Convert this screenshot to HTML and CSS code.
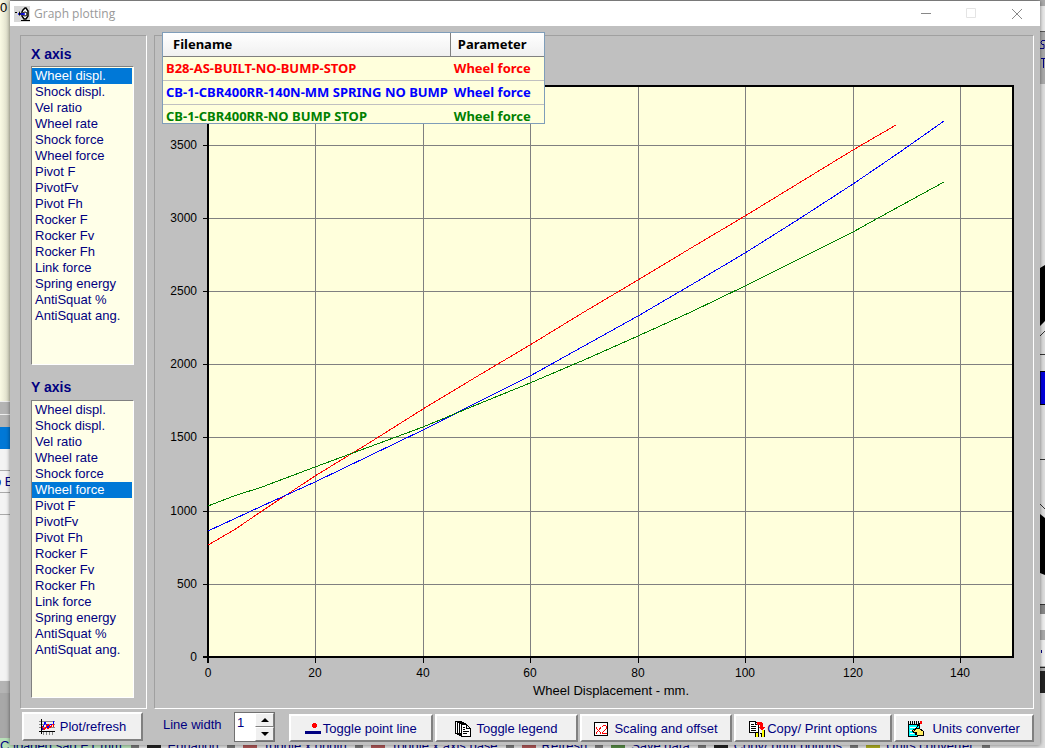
FILE: index.html
```html
<!DOCTYPE html>
<html lang="en">
<head>
<meta charset="utf-8">
<title>Graph plotting</title>
<link rel="stylesheet" href="styles.css">
</head>
<body>
<div class="backdrop" aria-hidden="true">
  <div class="back-left">
    <div class="back-cream">0</div>
    <div class="back-bar"></div>
    <div class="back-bar"></div>
    <div class="back-select"></div>
    <div class="back-row"></div>
    <div class="back-row">o&nbsp;E</div>
    <div class="back-row"></div>
    <div class="back-sheet"></div>
    <div class="back-bar"></div>
  </div>
  <svg class="back-right" viewBox="1040 0 5 748" preserveAspectRatio="none">
    <path fill="#aaa" d="M1040 0h5v748h-5z"/>
    <path fill="#e8e8e8" d="M1040 6h5v25h-5z"/>
    <path fill="#555" d="M1040 31h5v1h-5z"/>
    <path stroke="#000080" fill="none" d="M1045 40.500h-3l-1 2 1 2h2v4h-4M1041 58.500h4M1043.500 59v9"/>
    <path fill="#ddd" d="M1040 84h5v527h-5z"/>
    <path d="M1040 268l5-3v56l-5 5zM1040 514l5 4v57l-5-2z"/>
    <path fill="#00d" stroke="#000" d="M1040 371.500h6v33h-6z"/>
    <path stroke="#333" fill="none" d="M1040 336l5-5M1040 354.500h5M1040 459.500h5M1040 504l5 5M1040 604.500h5"/>
    <path fill="#888" d="M1040 605h5v9h-5z"/>
    <path fill="#eee" d="M1040 614h5v16h-5zM1040 640h5v26h-5z"/>
    <path fill="#000080" d="M1041 650h1v3h-1z"/>
    <path fill="#222" d="M1040 667h5v1h-5zM1040 671h5v22h-5z"/>
    <path fill="#ddd" d="M1040 693h5v55h-5z"/>
  </svg>
  <div class="back-tools">
    <span class="back-tool back-green">C loaded sag ET mm:</span>
    <span class="back-tool"><i class="mark"></i>Equation</span>
    <span class="back-tool"><i class="mark mark-red"></i>Toggle x origin</span>
    <span class="back-tool"><i class="mark mark-red"></i>Toggle x axis base</span>
    <span class="back-tool"><i class="mark mark-red"></i>Refresh</span>
    <span class="back-tool"><i class="mark mark-green"></i>Save data</span>
    <span class="back-tool"><i class="mark"></i>Copy/ print options</span>
    <span class="back-tool"><i class="mark mark-yellow"></i>Units converter</span>
    <span class="back-rest"></span>
  </div>
</div>

<main class="window">
  <header class="titlebar">
    <svg class="app-icon" width="16" height="16" viewBox="0 0 16 16">
      <path fill="#d8d8d8" d="M0 0h16v16H0z"/>
      <path fill="#fff" stroke="#000" stroke-width="1.500" d="M9 4l2-2h1l2 3v5l-2 3h-2l-2-3V6z"/>
      <circle cx="11" cy="8" r="2" fill="none" stroke="#000"/>
      <path stroke="#00f" stroke-width="1.500" d="M4 8h7"/>
      <path d="M1 6h2v1H1zM5 5l2 3-2 2zM7 14h9v1H7z"/>
    </svg>
    <h1 class="title">Graph plotting</h1>
    <div class="window-buttons">
      <button class="window-button" aria-label="Minimize"><svg width="12" height="12" viewBox="0 0 12 12"><path stroke="#888" d="M1 5.500h10"/></svg></button>
      <button class="window-button" aria-label="Maximize" disabled><svg width="12" height="12" viewBox="0 0 12 12"><path fill="none" stroke="#e4e4e4" d="M.5.5h9v9h-9z"/></svg></button>
      <button class="window-button" aria-label="Close"><svg width="12" height="12" viewBox="0 0 12 12"><path stroke="#888" d="M1 1l10 10M11 1L1 11"/></svg></button>
    </div>
  </header>

  <div class="content">
    <section class="panel axes">
      <label class="axis-label" for="x-axis">X axis</label>
      <select class="listbox" id="x-axis" size="18">
        <option selected>Wheel displ.</option><option>Shock displ.</option><option>Vel ratio</option><option>Wheel rate</option><option>Shock force</option><option>Wheel force</option><option>Pivot F</option><option>PivotFv</option><option>Pivot Fh</option><option>Rocker F</option><option>Rocker Fv</option><option>Rocker Fh</option><option>Link force</option><option>Spring energy</option><option>AntiSquat %</option><option>AntiSquat ang.</option>
      </select>
      <label class="axis-label" for="y-axis">Y axis</label>
      <select class="listbox" id="y-axis" size="18">
        <option>Wheel displ.</option><option>Shock displ.</option><option>Vel ratio</option><option>Wheel rate</option><option>Shock force</option><option selected>Wheel force</option><option>Pivot F</option><option>PivotFv</option><option>Pivot Fh</option><option>Rocker F</option><option>Rocker Fv</option><option>Rocker Fh</option><option>Link force</option><option>Spring energy</option><option>AntiSquat %</option><option>AntiSquat ang.</option>
      </select>
    </section>

    <section class="panel plot">
      <svg class="chart" viewBox="155 36 878 672" role="img" aria-label="Wheel force against wheel displacement">
        <path fill="#ffffdc" d="M208 86h805v571H208z"/>
        <path class="grid" d="M315.500 86v577M423.500 86v577M530.500 86v577M638.500 86v577M745.500 86v577M853.500 86v577M960.500 86v577M203 145.500h810M203 218.500h810M203 291.500h810M203 364.500h810M203 437.500h810M203 511.500h810M203 584.500h810"/>
        <path class="ticks" d="M315.500 657v6M423.500 657v6M530.500 657v6M638.500 657v6M745.500 657v6M853.500 657v6M960.500 657v6M203 145.500h5M203 218.500h5M203 291.500h5M203 364.500h5M203 437.500h5M203 511.500h5M203 584.500h5"/>
        <path class="frame" d="M208 86h805v571H208zM203 657h5M208 657v6"/>
        <path class="curve red" d="M208 545L234 530 262 511 315 476 369 443 423 409 476 377 530 345 584 312 638 280 691 248 745 216 799 183 853 150 896 125"/>
        <path class="curve blue" d="M208 531L262 506 315 482 369 456 423 430 476 403 530 376 584 346 638 316 691 285 745 253 799 219 853 184 900 152 944 121"/>
        <path class="curve green" d="M208 506L234 496 262 487 315 467 369 447 423 427 476 405 530 383 584 360 638 336 691 312 745 286 799 259 853 232 880 217 944 182"/>
        <g class="tick-text y-text">
          <text x="197" y="149">3500</text><text x="197" y="222">3000</text><text x="197" y="295">2500</text><text x="197" y="368">2000</text><text x="197" y="441">1500</text><text x="197" y="515">1000</text><text x="197" y="588">500</text><text x="197" y="661">0</text>
        </g>
        <g class="tick-text x-text">
          <text x="208" y="677">0</text><text x="315" y="677">20</text><text x="423" y="677">40</text><text x="530" y="677">60</text><text x="638" y="677">80</text><text x="745" y="677">100</text><text x="853" y="677">120</text><text x="960" y="677">140</text>
        </g>
        <text class="caption" x="611" y="695">Wheel Displacement - mm.</text>
      </svg>
      <table class="legend">
        <thead><tr><th>Filename</th><th>Parameter</th></tr></thead>
        <tbody>
          <tr class="row-red"><td>B28-AS-BUILT-NO-BUMP-STOP</td><td>Wheel force</td></tr>
          <tr class="row-blue"><td>CB-1-CBR400RR-140N-MM SPRING NO BUMP</td><td>Wheel force</td></tr>
          <tr class="row-green"><td>CB-1-CBR400RR-NO BUMP STOP</td><td>Wheel force</td></tr>
        </tbody>
      </table>
    </section>

    <button class="button refresh">
      <svg width="16" height="16" viewBox="0 0 16 16" shape-rendering="crispEdges">
        <path stroke="#888" d="M0 2.500h16M0 5.500h16M0 8.500h16M4.500 13v3M7.500 13v3M10.500 13v3M13.500 13v3"/>
        <path fill="none" stroke="#000" d="M2.500 0v15M0 12.500h16"/>
        <path fill="none" stroke="#00f" d="M3 11l3-8 3 6 3-4 2 1 1-4"/>
        <path fill="none" stroke="#f00" d="M3 7l2 4 4-6 2 4 3-4 1 3M4 11l3-3 2 2 3-3"/>
      </svg>
      Plot/refresh
    </button>

    <div class="toolbar">
      <label class="width-label" for="line-width">Line width</label>
      <div class="spinner">
        <input class="spinner-input" id="line-width" type="text" value="1">
        <div class="spinner-buttons">
          <button class="spin" aria-label="Increase"><svg width="8" height="4" viewBox="0 0 8 4"><path d="M0 4h8L4 0z"/></svg></button>
          <button class="spin" aria-label="Decrease"><svg width="8" height="4" viewBox="0 0 8 4"><path d="M0 0h8L4 4z"/></svg></button>
        </div>
      </div>
      <div class="actions">
        <button class="button tight">
          <svg width="16" height="16" viewBox="0 0 16 16" shape-rendering="crispEdges"><path fill="#000080" d="M0 10h16v3H0z"/><path fill="#f00" d="M8 2h3v1h1v3h-1v1H8V6H7V3h1z"/></svg>
          Toggle point line
        </button>
        <button class="button">
          <svg width="16" height="16" viewBox="0 0 16 16" shape-rendering="crispEdges">
            <path fill="#fff" stroke="#000" d="M.5 12.500V.5h6v12zM2.500 13.500v-12h6v12zM4.500 14.500v-12h6v12z"/>
            <path fill="#fff" stroke="#000" d="M6.500 15.500v-12h5l4 4v8zM11.500 3.500v4h4"/>
            <path stroke="#000" d="M8 6.500h2M8 8.500h2M8 10.500h6M8 12.500h4"/>
          </svg>
          Toggle legend
        </button>
        <button class="button">
          <svg width="15" height="15" viewBox="0 0 15 15" shape-rendering="crispEdges">
            <path fill="#fff" stroke="#000" d="M.5.5h13v13H.5z"/>
            <path fill="none" stroke="#f00" d="M2 5.500l5 6M7 5.500l-5 6M8.500 5V4.500l1-1h2l1 1v2l-4 4v.5H13"/>
          </svg>
          Scaling and offset
        </button>
        <button class="button tight">
          <svg width="16" height="16" viewBox="0 0 16 16" shape-rendering="crispEdges">
            <path fill="#fff" stroke="#000" d="M.5.5h6l3 3v8h-9zM6.500.5v3h3"/>
            <path stroke="#000" d="M2 3.500h3M2 5.500h5M2 7.500h5M2 9.500h5"/>
            <path fill="#f00" d="M8 1h4l2 2v3h2l-3 4-4-4h2V4H8z"/>
            <path fill="#ff0" d="M7 11h2v5H7zM13 9h2v7h-2z"/>
            <path fill="none" stroke="#000" d="M6.500 16v-5h3v5M12.500 16v-4h-2M15.500 16V9"/>
          </svg>
          Copy/ Print options
        </button>
        <button class="button wide">
          <svg width="16" height="16" viewBox="0 0 16 16" shape-rendering="crispEdges">
            <path fill="#fff" stroke="#000" d="M.5 3.500h11v10l-2 2H.5z"/>
            <path fill="#0ff" d="M1 4h10v9l-2 2H1z"/>
            <path stroke="#000" stroke-dasharray="1 1" stroke-width="3" d="M0 1.500h12"/>
            <path stroke="#fff" d="M2 6.500h6M2 9.500h4M2 12.500h4"/>
            <path fill="#ffec60" stroke="#000" d="M4.500 9.500l3-2h4l4 3v4h-5l-3-1 1-2h-3z"/>
            <path stroke="#000" d="M6 10l6-8"/><path fill="#f00" d="M12 0h2v3h-2z"/>
          </svg>
          Units converter
        </button>
      </div>
    </div>
  </div>
</main>
</body>
</html>
```
FILE: styles.css
```css
* { box-sizing: border-box; }

body {
  margin: 0;
  height: 100vh;
  overflow: hidden;
  position: relative;
  font: 13px/16px "Liberation Sans", Arial, sans-serif;
  color: #000080;
  background: #aaa;
}

button, input, select { font: inherit; color: inherit; margin: 0; }

/* Application behind the dialog */
.backdrop {
  height: 100%;
  display: grid;
  grid-template-columns: 10px 1fr 5px;
  grid-template-rows: 1fr 10px;
  background: #999;
}
.back-left { grid-area: 1 / 1; display: flex; flex-direction: column; overflow: hidden; min-height: 0; background: #a8a8a8; }
.back-cream { height: 401px; background: linear-gradient(90deg, #fafae4, #d8d8c4); color: #000; }
.back-bar { height: 13px; background: #b4b4b4; border-top: 1px solid #eee; }
.back-select { height: 22px; background: #0078d7; }
.back-row { height: 22px; background: #f4f4f4; border-bottom: 1px solid #aaa; white-space: nowrap; line-height: 22px; text-indent: -6px; }
.back-sheet { height: 165px; background: #f4f4f4; }
.back-right { grid-area: 1 / 3 / 3 / 4; width: 100%; height: 100%; }
.back-tools {
  grid-area: 2 / 1 / 3 / 4;
  display: flex;
  gap: 8px;
  overflow: hidden;
  line-height: 15px;
  white-space: nowrap;
  background: #777;
}
.back-tool { display: flex; gap: 6px; padding: 0 8px; background: #ddd; }
.back-green { padding: 0 6px 0 0; background: #b8e0b8; }
.back-rest { flex: 1; background: #ddd; }
.mark { width: 14px; background: #222; }
.mark-red { background: #a55; }
.mark-green { background: #584; }
.mark-yellow { background: #aa2; }

/* Dialog */
.window {
  position: absolute;
  inset: 1px 5px 3px 10px;
  display: flex;
  flex-direction: column;
  background: #c0c0c0;
  box-shadow: 0 0 4px rgba(0, 0, 0, .5);
}
.titlebar { display: flex; align-items: center; height: 25px; padding-left: 4px; background: #fff; }
.title { margin: 0 0 0 4px; flex: 1; font: 12px/16px "Open Sans", "Noto Sans", sans-serif; color: #999; }
.window-buttons { display: flex; padding-right: 1px; }
.window-button { display: flex; align-items: center; justify-content: center; width: 46px; height: 24px; padding: 0; border: 0; background: none; }
.window-button:last-child { width: 44px; }

.content {
  flex: 1;
  min-height: 0;
  display: grid;
  grid-template-columns: 127px 1fr;
  grid-template-rows: 1fr 30px;
  gap: 3px 7px;
  padding: 9px 6px 3px 10px;
}
.panel { border: 1px solid; border-color: #a0a0a0 #fff #fff #a0a0a0; min-height: 0; }
.axes { display: flex; flex-direction: column; padding: 8px 12px 10px 10px; }
.axis-label { font-weight: bold; font-size: 14px; line-height: 20px; padding-bottom: 2px; }
.listbox {
  flex: 1;
  min-height: 0;
  width: 100%;
  padding: 1px 1px 0 0;
  overflow: hidden;
  border: 1px solid;
  border-color: #808080 #fff #fff #808080;
  border-radius: 0;
  outline: 0;
  background: #ffffe8;
}
.listbox + .axis-label { padding: 12px 0 3px; }
.listbox option { min-height: 16px; padding: 0 0 0 3px; line-height: 18px; height: 16px; }
.listbox option:checked { color: #fff; background: #0078d7 linear-gradient(#0078d7, #0078d7); }

.plot { position: relative; }
.chart { display: block; width: 100%; height: 100%; }
.grid { stroke: #808080; fill: none; }
.ticks { stroke: #000; fill: none; }
.frame { stroke: #000; stroke-width: 2px; fill: none; }
.curve { fill: none; shape-rendering: crispEdges; }
.red { stroke: #f00; }
.blue { stroke: #00f; }
.green { stroke: #008000; }
.tick-text { font-size: 12px; fill: #000; }
.y-text { text-anchor: end; }
.x-text, .caption { text-anchor: middle; }
.caption { font-size: 13px; fill: #000; }

.legend {
  position: absolute;
  left: 7px;
  top: -4px;
  width: 383px;
  height: 92px;
  display: block;
  overflow: hidden;
  border: 1px solid #7f9db9;
  border-spacing: 0;
  background: #ffffdc;
  font: bold 13px/23px "Noto Sans", "Open Sans", sans-serif;
  white-space: nowrap;
}
.legend th { height: 24px; padding: 0 0 0 7px; text-align: left; color: #000; background: linear-gradient(#fff, #f0f0f0); border-bottom: 1px solid #808080; }
.legend th:first-child { width: 288px; padding-left: 10px; border-right: 1px solid #808080; }
.legend th:last-child { width: 94px; }
.legend td { padding: 0 0 0 3px; border-bottom: 1px solid #c0c0c0; }
.row-red { color: #f00; }
.row-blue { color: #00f; }
.row-green { color: #008000; }

.button {
  display: flex;
  align-items: center;
  justify-content: center;
  gap: 5px;
  padding: 2px 0 0;
  white-space: nowrap;
  background: #f0f0f0;
  border: 2px solid;
  border-color: #fff #808080 #808080 #fff;
}
.button.tight { gap: 2px; }
.button.wide { gap: 8px; }
.refresh { height: 29px; margin: 0 4px 0 2px; padding: 0; }
.toolbar { display: flex; align-items: center; padding-left: 9px; }
.width-label { width: 71px; padding-bottom: 4px; }
.spinner { display: flex; width: 41px; height: 30px; border: 1px solid #707070; background: #fff; }
.spinner-input { flex: 1; min-width: 0; padding: 0 0 8px 2px; border: 0; background: none; }
.spinner-buttons { display: flex; flex-direction: column; width: 19px; }
.spin { flex: 1; display: flex; align-items: center; justify-content: center; padding: 0; background: #f0f0f0; border: 1px solid; border-color: #fff #808080 #808080 #fff; }
.actions { flex: 1; align-self: end; display: grid; grid-template-columns: 144fr 144fr 152fr 159fr 140fr; gap: 2px; height: 28px; margin-left: 14px; }
```
